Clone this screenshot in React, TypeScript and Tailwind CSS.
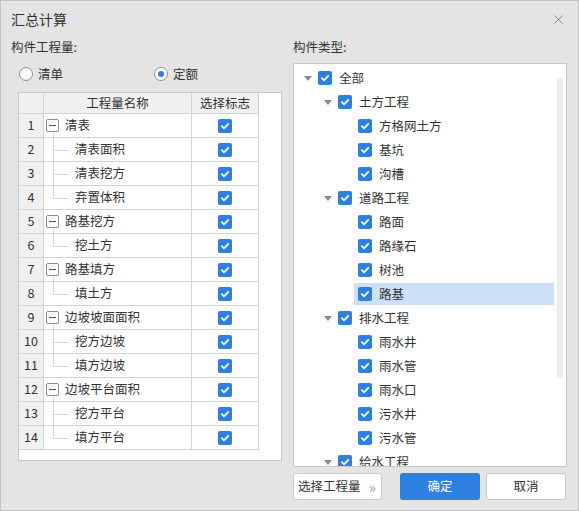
import { X } from "lucide-react";

type QtyRow = { no: number; name: string; parent: boolean; last?: boolean };

const qtyRows: QtyRow[] = [
  { no: 1, name: "清表", parent: true },
  { no: 2, name: "清表面积", parent: false },
  { no: 3, name: "清表挖方", parent: false },
  { no: 4, name: "弃置体积", parent: false, last: true },
  { no: 5, name: "路基挖方", parent: true },
  { no: 6, name: "挖土方", parent: false, last: true },
  { no: 7, name: "路基填方", parent: true },
  { no: 8, name: "填土方", parent: false, last: true },
  { no: 9, name: "边坡坡面面积", parent: true },
  { no: 10, name: "挖方边坡", parent: false },
  { no: 11, name: "填方边坡", parent: false, last: true },
  { no: 12, name: "边坡平台面积", parent: true },
  { no: 13, name: "挖方平台", parent: false },
  { no: 14, name: "填方平台", parent: false, last: true },
];

type TypeNode = { label: string; level: number; caret?: boolean; selected?: boolean };

const typeNodes: TypeNode[] = [
  { label: "全部", level: 0, caret: true },
  { label: "土方工程", level: 1, caret: true },
  { label: "方格网土方", level: 2 },
  { label: "基坑", level: 2 },
  { label: "沟槽", level: 2 },
  { label: "道路工程", level: 1, caret: true },
  { label: "路面", level: 2 },
  { label: "路缘石", level: 2 },
  { label: "树池", level: 2 },
  { label: "路基", level: 2, selected: true },
  { label: "排水工程", level: 1, caret: true },
  { label: "雨水井", level: 2 },
  { label: "雨水管", level: 2 },
  { label: "雨水口", level: 2 },
  { label: "污水井", level: 2 },
  { label: "污水管", level: 2 },
  { label: "给水工程", level: 1, caret: true },
];

const Check = () => (
  <span className="flex h-[14px] w-[14px] shrink-0 items-center justify-center rounded-[2px] bg-[#2d7fe0]">
    <svg width="10" height="10" viewBox="0 0 10 10">
      <path d="M1.8 5.2 L4 7.3 L8.3 2.8" fill="none" stroke="#fff" strokeWidth="1.7" strokeLinecap="round" strokeLinejoin="round" />
    </svg>
  </span>
);

const Caret = () => (
  <svg width="8" height="5" viewBox="0 0 8 5" className="shrink-0">
    <path d="M0 0 L8 0 L4 5 Z" fill="#8a8a8a" />
  </svg>
);

const Radio = ({ on }: { on?: boolean }) => (
  <span className="flex h-[14px] w-[14px] items-center justify-center rounded-full border border-[#8f8f8f] bg-white">
    {on && <span className="h-[6px] w-[6px] rounded-full bg-[#2d7fe0]" />}
  </span>
);

export default function App() {
  return (
    <div
      className="flex h-[511px] w-[579px] flex-col border border-[#c4c4c4] bg-[#e4e4e4] text-[12.5px] text-[#333]"
      style={{ fontFamily: '"Noto Sans CJK SC", "Noto Sans", sans-serif' }}
    >
      <div className="flex h-[37px] shrink-0 items-center justify-between pl-[10px] pr-[12px]">
        <span className="text-[14px] text-[#333]">汇总计算</span>
        <X size={15} strokeWidth={1.4} className="text-[#7a7a7a]" />
      </div>

      <div className="flex gap-[11px] pl-[10px]">
        {/* left */}
        <div className="flex w-[271px] flex-col">
          <div className="flex h-[18px] items-center">构件工程量:</div>
          <div className="flex h-[36px] items-center pl-[8px]">
            <label className="flex w-[135px] items-center gap-[5px]">
              <Radio />
              <span>清单</span>
            </label>
            <label className="flex items-center gap-[5px]">
              <Radio on />
              <span>定额</span>
            </label>
          </div>
          <div className="ml-[7px] h-[369px] w-[264px] border border-[#c8c8c8] bg-white">
            <div className="grid h-[21px] w-[240px] grid-cols-[25px_148px_67px] bg-[#f0f0f0]">
              <div className="border-r border-b border-[#d4d4d4]" />
              <div className="flex items-center justify-center border-r border-b border-[#d4d4d4]">工程量名称</div>
              <div className="flex items-center justify-center border-r border-b border-[#d4d4d4]">选择标志</div>
            </div>
            {qtyRows.map((r) => (
              <div key={r.no} className="grid h-[24px] w-[240px] grid-cols-[25px_148px_67px]">
                <div className="flex items-center justify-center border-r border-b border-[#d4d4d4] bg-[#f0f0f0]">{r.no}</div>
                <div className="relative flex items-center border-r border-b border-[#d4d4d4]">
                  {r.parent ? (
                    <>
                      <span className="absolute top-[19px] left-[9px] h-[6px] w-px bg-[#d6d6d6]" />
                      <span className="ml-[2px] flex h-[13px] w-[13px] items-center justify-center rounded-[2px] border border-[#8c8c8c] bg-white">
                        <span className="h-px w-[7px] bg-[#555]" />
                      </span>
                      <span className="ml-[6px]">{r.name}</span>
                    </>
                  ) : (
                    <>
                      <span className={`absolute top-0 left-[9px] w-px bg-[#d6d6d6] ${r.last ? "h-[12px]" : "h-[24px]"}`} />
                      <span className="absolute top-[12px] left-[9px] h-px w-[16px] bg-[#d6d6d6]" />
                      <span className="ml-[31px]">{r.name}</span>
                    </>
                  )}
                </div>
                <div className="flex items-center justify-center border-r border-b border-[#d4d4d4]">
                  <Check />
                </div>
              </div>
            ))}
          </div>
        </div>

        {/* right */}
        <div className="flex w-[274px] flex-col">
          <div className="flex h-[18px] items-center">构件类型:</div>
          <div className="relative mt-[7px] h-[404px] w-[274px] overflow-hidden border border-[#c8c8c8] bg-white pt-[2px]">
            <span className="absolute top-[14px] right-[3px] h-[300px] w-[6px] rounded-full bg-[#ededed]" />
            {typeNodes.map((n) => (
              <div key={n.label} className="flex h-[24px] items-center" style={{ paddingLeft: 10 + n.level * 20 }}>
                <span className="flex w-[14px] items-center">{n.caret && <Caret />}</span>
                <div
                  className={`flex h-[22px] items-center gap-[7px] pr-[8px] ${n.selected ? "w-[200px] bg-[#cce0f7]" : ""}`}
                  style={{ marginLeft: -4, paddingLeft: 4 }}
                >
                  <Check />
                  <span>{n.label}</span>
                </div>
              </div>
            ))}
          </div>
          <div className="mt-[6px] flex h-[27px] gap-[6px]">
            <button className="flex w-[89px] items-center justify-between rounded-[3px] border border-[#c6cede] bg-white pr-[5px] pl-[4px]">
              <span>选择工程量</span>
              <span className="text-[15px] leading-none text-[#a0a0a0]">»</span>
            </button>
            <button className="ml-[12px] w-[80px] rounded-[3px] bg-[#2d7fe0] text-white">确定</button>
            <button className="w-[80px] rounded-[3px] border border-[#c8c8c8] bg-white">取消</button>
          </div>
        </div>
      </div>
    </div>
  );
}
